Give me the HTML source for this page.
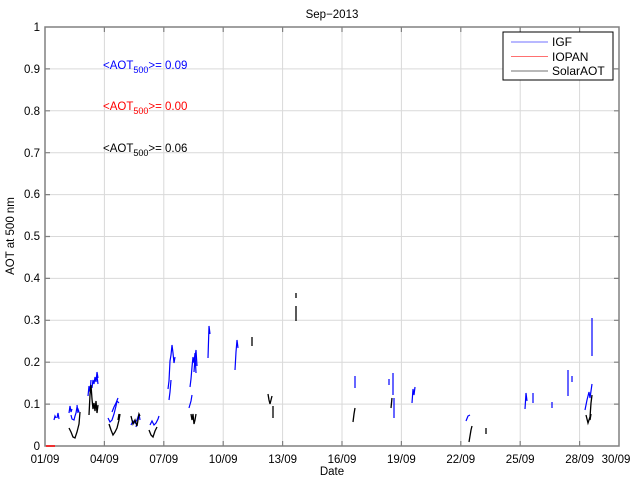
<!DOCTYPE html>
<html><head><meta charset="utf-8"><style>
html,body{margin:0;padding:0;background:#fff}
svg{display:block;font-family:"Liberation Sans",sans-serif}
</style></head><body>
<svg width="640" height="480" viewBox="0 0 640 480" xmlns="http://www.w3.org/2000/svg">
<rect width="640" height="480" fill="#fff"/>
<g stroke="#d9d9d9" stroke-width="1">
<path d="M104.4 27V446M163.8 27V446M223.2 27V446M282.6 27V446M342 27V446M401.4 27V446M460.8 27V446M520.2 27V446M579.6 27V446"/>
<path d="M45 404.1H619M45 362.2H619M45 320.3H619M45 278.4H619M45 236.5H619M45 194.6H619M45 152.7H619M45 110.8H619M45 68.9H619"/>
</g>
<g stroke="#808080" stroke-width="1.2">
<path d="M104.4 446v-5M163.8 446v-5M223.2 446v-5M282.6 446v-5M342 446v-5M401.4 446v-5M460.8 446v-5M520.2 446v-5M579.6 446v-5"/>
<path d="M104.4 27v5M163.8 27v5M223.2 27v5M282.6 27v5M342 27v5M401.4 27v5M460.8 27v5M520.2 27v5M579.6 27v5"/>
<path d="M45 404.1h5M45 362.2h5M45 320.3h5M45 278.4h5M45 236.5h5M45 194.6h5M45 152.7h5M45 110.8h5M45 68.9h5"/>
<path d="M619 404.1h-5M619 362.2h-5M619 320.3h-5M619 278.4h-5M619 236.5h-5M619 194.6h-5M619 152.7h-5M619 110.8h-5M619 68.9h-5"/>
<rect x="45" y="27" width="574" height="419" fill="none" stroke-width="1.5"/>
</g>
<g fill="#000" font-size="11.5" text-anchor="end">
<text x="40" y="450">0</text><text x="40" y="408">0.1</text><text x="40" y="366">0.2</text><text x="40" y="324">0.3</text><text x="40" y="282">0.4</text><text x="40" y="240">0.5</text><text x="40" y="198">0.6</text><text x="40" y="157">0.7</text><text x="40" y="115">0.8</text><text x="40" y="73">0.9</text><text x="40" y="31">1</text>
</g>
<g fill="#000" font-size="11.5" text-anchor="middle">
<text x="45" y="463">01/09</text><text x="104.4" y="463">04/09</text><text x="163.8" y="463">07/09</text><text x="223.2" y="463">10/09</text><text x="282.6" y="463">13/09</text><text x="342" y="463">16/09</text><text x="401.4" y="463">19/09</text><text x="460.8" y="463">22/09</text><text x="520.2" y="463">25/09</text><text x="579.6" y="463">28/09</text><text x="616" y="463">30/09</text>
<text x="332" y="475">Date</text>
<text x="332" y="18">Sep−2013</text>
<text transform="translate(14 236) rotate(-90)">AOT at 500 nm</text>
</g>
<g font-size="11.5">
<text x="103" y="69" fill="#0000ff">&lt;AOT<tspan font-size="9" dy="4">500</tspan><tspan dy="-4">&gt;= 0.09</tspan></text>
<text x="103" y="110" fill="#ff0000">&lt;AOT<tspan font-size="9" dy="4">500</tspan><tspan dy="-4">&gt;= 0.00</tspan></text>
<text x="103" y="152" fill="#000">&lt;AOT<tspan font-size="9" dy="4">500</tspan><tspan dy="-4">&gt;= 0.06</tspan></text>
</g>
<line x1="46" y1="446" x2="55" y2="446" stroke="#f00" stroke-width="1.5"/>
<g fill="none" stroke="#0000ff" stroke-width="1.2">
<path d="M54 420l1-4 1 2M57 418l1-5 1 6"/>
<path d="M69 413l1-7 1 6 1-3M71 415l1 4 2 1 1-4 1-3 1-6 1 2 1 3M77 405l1 8"/>
<path d="M88 396l1-10 1 6 1-12M92 388l1-8 1 4 1-7 1 5 1-10 1 6M97 376l1 8"/>
<path d="M108 418l2 4 2-2 2-6 2-8 1-5 2 2M112 412l2-5 2-4 2-5"/>
<path d="M131 425l2-4 2 2 2-3 2-6 1 6M136 427l1-4"/>
<path d="M150 425l2-4 2 4 2-2 2-4 1-3"/>
<path d="M168 389l1-8 1-20 1-6 1-10 1 8 1 10 1-6M169 400l1-8 1-12"/>
<path d="M190 387l1-8 1-12 1-10 1 6 1-10 1 20M194 372l1-14 1-8 1 16M189 408l2-7 1-6"/>
<path d="M208 358l1-32 1 8"/>
<path d="M235 370l1-18 1-12 1 8"/>
<path d="M355 388l0-12"/>
<path d="M389 385l0-6M393 395l0-22M394 418l0-20"/>
<path d="M412 403l1-14 1 6 1-8"/>
<path d="M466 421l2-5 2-1"/>
<path d="M525 409l1-16 1 8M533 403l0-10"/>
<path d="M552 408l0-6"/>
<path d="M568 396l0-26M572 382l0-6"/>
<path d="M585 410l2-10 2-8 1 6 2-14M592 356l0-38"/>
</g>
<g fill="none" stroke="#000" stroke-width="1.3">
<path d="M69 428l2 4 2 5 2 1 2-6 2-8 1-12"/>
<path d="M89 415l1-20 1-10 1 14 1 10 1-6 1 8 1-10 1 12 1-8"/>
<path d="M109 424l2 6 2 5 2-3 2-4 2-8 1-6M118 420l1-6"/>
<path d="M131 416l2 8 2-4 2 6 2-12 1 2"/>
<path d="M149 430l2 5 2 2 2-6 2-4"/>
<path d="M191 414l1 6 1-6 1 10 1-4 1-6"/>
<path d="M252 346l0-9"/>
<path d="M268 394l1 6 1 4 2-8M273 406l0 12"/>
<path d="M296 306l0 15M296 293l0 5"/>
<path d="M353 422l1-8 1-6"/>
<path d="M391 408l1-10"/>
<path d="M469 442l1-6 1-6 1-4"/>
<path d="M486 434l0-6"/>
<path d="M586 415l2 8 2-6 1-14 1-8M590 420l1-6"/>
</g>
<g>
<rect x="503" y="32" width="110" height="48" fill="#fff" stroke="#000" stroke-width="1"/>
<line x1="511" y1="42" x2="548" y2="42" stroke="#7070ff" stroke-width="1"/>
<line x1="511" y1="56.5" x2="548" y2="56.5" stroke="#ff7070" stroke-width="1"/>
<line x1="511" y1="71" x2="548" y2="71" stroke="#707070" stroke-width="1"/>
<g font-size="12" fill="#000">
<text x="552" y="46">IGF</text><text x="552" y="61">IOPAN</text><text x="552" y="75">SolarAOT</text>
</g>
</g>
</svg>
</body></html>
